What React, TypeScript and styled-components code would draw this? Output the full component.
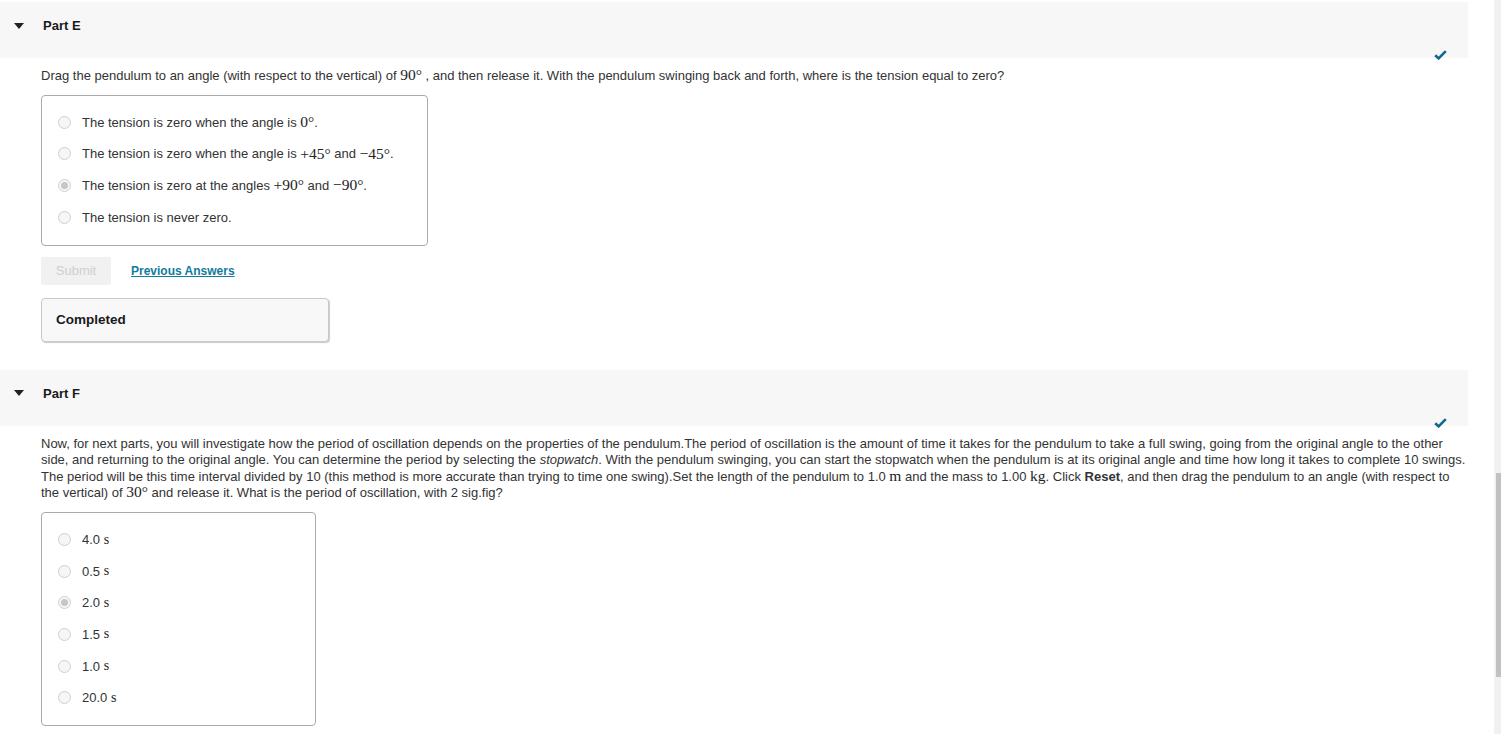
import React from "react";
import styled, { createGlobalStyle } from "styled-components";

const Global = createGlobalStyle`
  html, body { margin: 0; padding: 0; background: #fff; overflow: hidden; }
  body { font-family: "Liberation Sans", Arial, sans-serif; color: #333; }
`;

const Page = styled.div`
  width: 1468px;
  padding-top: 2px;
`;

const Section = styled.section<{ $gap?: number }>`
  margin-bottom: ${(p) => p.$gap ?? 0}px;
`;

const Header = styled.div`
  height: 56px;
  background: #f7f7f7;
  display: grid;
  grid-template-rows: 46px 10px;
  box-sizing: border-box;
`;

const TitleRow = styled.div`
  display: flex;
  align-items: center;
  padding-left: 14px;
  padding-top: 1px;
  height: 46px;
  box-sizing: border-box;
  line-height: 1;
`;

const Caret = styled.span`
  width: 0;
  height: 0;
  border-left: 5.5px solid transparent;
  border-right: 5.5px solid transparent;
  border-top: 6px solid #222;
  margin-right: 19px;
`;

const Title = styled.span`
  font-size: 13px;
  font-weight: bold;
  color: #1a1a1a;
`;

const CheckWrap = styled.div`
  justify-self: end;
  margin-right: 21px;
  margin-top: -2px;
  height: 10px;
`;

const Body = styled.div`
  padding-left: 41px;
  padding-top: 10px;
`;

const Prompt = styled.p`
  margin: 0 0 10px;
  font-size: 13px;
  line-height: 16.5px;
  color: #333;
`;

const Math = styled.span<{ $size?: number }>`
  font-family: "Liberation Serif", "Times New Roman", serif;
  font-size: ${(p) => p.$size ?? 15.5}px;
  line-height: 0;
  color: #222;
`;

const OptionBox = styled.div<{ $w: number }>`
  width: ${(p) => p.$w}px;
  box-sizing: border-box;
  border: 1px solid #aaa;
  border-radius: 4px;
  padding: 11px 0 12px;
`;

const Option = styled.label`
  display: flex;
  align-items: center;
  height: 31.6px;
  padding-left: 16px;
  font-size: 13px;
  color: #333;
`;

const Radio = styled.span<{ $on?: boolean }>`
  width: 11px;
  height: 11px;
  border-radius: 50%;
  border: 1px solid #d0d0d0;
  background: #f6f6f6;
  margin-right: 11px;
  display: inline-flex;
  align-items: center;
  justify-content: center;
  flex-shrink: 0;
  &::after {
    content: "";
    width: 7px;
    height: 7px;
    border-radius: 50%;
    background: ${(p) => (p.$on ? "#c6c6c6" : "transparent")};
  }
`;

const Actions = styled.div`
  display: flex;
  align-items: center;
  gap: 20px;
  margin-top: 11px;
`;

const SubmitButton = styled.button`
  width: 70px;
  height: 28px;
  border: none;
  border-radius: 2px;
  background: #f1f1f1;
  color: #cfcfcf;
  font-family: "Liberation Sans", Arial, sans-serif;
  font-size: 13px;
  padding: 0;
`;

const PrevLink = styled.a`
  font-size: 12px;
  font-weight: bold;
  color: #117ba0;
  text-decoration: underline;
`;

const Status = styled.div`
  margin-top: 13px;
  width: 288px;
  height: 44px;
  box-sizing: border-box;
  background: #f8f8f8;
  border: 1px solid #c8c8c8;
  border-radius: 4px;
  box-shadow: 1px 1px 1px #ccc;
  display: flex;
  align-items: center;
  padding-left: 14px;
  font-size: 13.5px;
  font-weight: bold;
  color: #1a1a1a;
`;

const ScrollTrack = styled.div`
  position: fixed;
  top: 0;
  right: 0;
  width: 7px;
  height: 100%;
  background: #f1f1f1;
`;

const ScrollThumb = styled.div`
  position: absolute;
  top: 473px;
  right: 0;
  width: 5px;
  height: 204px;
  background: #c1c1c1;
`;

const Check = () => (
  <svg width="13" height="10" viewBox="0 0 13 10">
    <path d="M1.2 5.2 L4.6 8.4 L11.8 1.2" fill="none" stroke="#0f6a8b" strokeWidth="2.6" />
  </svg>
);

const PartHeader = ({ label }: { label: string }) => (
  <Header>
    <TitleRow>
      <Caret />
      <Title>{label}</Title>
    </TitleRow>
    <CheckWrap>
      <Check />
    </CheckWrap>
  </Header>
);

export default function App() {
  const partF = ["4.0", "0.5", "2.0", "1.5", "1.0", "20.0"];
  return (
    <>
      <Global />
      <Page>
        <Section $gap={28}>
          <PartHeader label="Part E" />
          <Body>
            <Prompt>
              Drag the pendulum to an angle (with respect to the vertical) of <Math>90°</Math> , and then release it. With the pendulum swinging back and forth, where is the tension equal to zero?
            </Prompt>
            <OptionBox $w={387}>
              <Option>
                <Radio />
                The tension is zero when the angle is&nbsp;<Math>0°</Math>.
              </Option>
              <Option>
                <Radio />
                The tension is zero when the angle is&nbsp;<Math>+45°</Math>&nbsp;and&nbsp;<Math>−45°</Math>.
              </Option>
              <Option>
                <Radio $on />
                The tension is zero at the angles&nbsp;<Math>+90°</Math>&nbsp;and&nbsp;<Math>−90°</Math>.
              </Option>
              <Option>
                <Radio />
                The tension is never zero.
              </Option>
            </OptionBox>
            <Actions>
              <SubmitButton disabled>Submit</SubmitButton>
              <PrevLink href="#">Previous Answers</PrevLink>
            </Actions>
            <Status>Completed</Status>
          </Body>
        </Section>
        <Section>
          <PartHeader label="Part F" />
          <Body>
            <Prompt>
              Now, for next parts, you will investigate how the period of oscillation depends on the properties of the pendulum.The period of oscillation is the amount of time it takes for the pendulum to take a full swing, going from the original angle to the other side, and returning to the original angle. You can determine the period by selecting the <i>stopwatch</i>. With the pendulum swinging, you can start the stopwatch when the pendulum is at its original angle and time how long it takes to complete 10 swings. The period will be this time interval divided by 10 (this method is more accurate than trying to time one swing).Set the length of the pendulum to 1.0 <Math>m</Math> and the mass to 1.00 <Math>kg</Math>. Click <b>Reset</b>, and then drag the pendulum to an angle (with respect to the vertical) of <Math>30°</Math> and release it. What is the period of oscillation, with 2 sig.fig?
            </Prompt>
            <OptionBox $w={275}>
              {partF.map((v) => (
                <Option key={v}>
                  <Radio $on={v === "2.0"} />
                  {v}&nbsp;<Math $size={14}>s</Math>
                </Option>
              ))}
            </OptionBox>
          </Body>
        </Section>
      </Page>
      <ScrollTrack>
        <ScrollThumb />
      </ScrollTrack>
    </>
  );
}
